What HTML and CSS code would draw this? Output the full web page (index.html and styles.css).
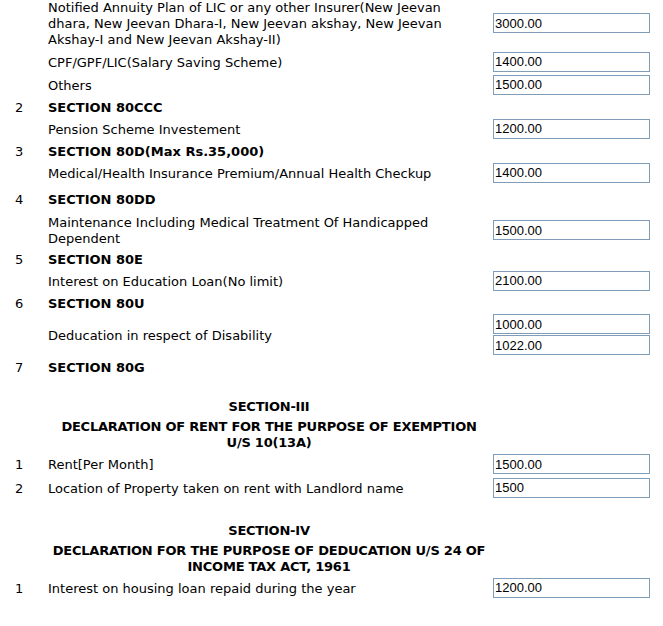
FILE: index.html
```html
<!DOCTYPE html>
<html>
<head>
<meta charset="utf-8">
<link rel="stylesheet" href="styles.css">
</head>
<body>
<div class="form">
  <div class="row r-tall">
    <span class="num"></span>
    <span class="label">Notified Annuity Plan of LIC or any other Insurer(New Jeevan dhara, New Jeevan Dhara-I, New Jeevan akshay, New Jeevan Akshay-I and New Jeevan Akshay-II)</span>
    <input class="field" type="text" value="3000.00">
  </div>
  <div class="row r-input">
    <span class="num"></span>
    <span class="label">CPF/GPF/LIC(Salary Saving Scheme)</span>
    <input class="field" type="text" value="1400.00">
  </div>
  <div class="row r-input">
    <span class="num"></span>
    <span class="label">Others</span>
    <input class="field" type="text" value="1500.00">
  </div>
  <div class="row r-text">
    <span class="num">2</span>
    <span class="label bold">SECTION 80CCC</span>
  </div>
  <div class="row r-input">
    <span class="num"></span>
    <span class="label">Pension Scheme Investement</span>
    <input class="field" type="text" value="1200.00">
  </div>
  <div class="row r-text">
    <span class="num">3</span>
    <span class="label bold">SECTION 80D(Max Rs.35,000)</span>
  </div>
  <div class="row r-input">
    <span class="num"></span>
    <span class="label">Medical/Health Insurance Premium/Annual Health Checkup</span>
    <input class="field" type="text" value="1400.00">
  </div>
  <div class="row r-text r-gap">
    <span class="num">4</span>
    <span class="label bold">SECTION 80DD</span>
  </div>
  <div class="row r-two r-gap3">
    <span class="num"></span>
    <span class="label">Maintenance Including Medical Treatment Of Handicapped Dependent</span>
    <input class="field" type="text" value="1500.00">
  </div>
  <div class="row r-text">
    <span class="num">5</span>
    <span class="label bold">SECTION 80E</span>
  </div>
  <div class="row r-input">
    <span class="num"></span>
    <span class="label">Interest on Education Loan(No limit)</span>
    <input class="field" type="text" value="2100.00">
  </div>
  <div class="row r-text">
    <span class="num">6</span>
    <span class="label bold">SECTION 80U</span>
  </div>
  <div class="row r-double">
    <span class="num"></span>
    <span class="label">Deducation in respect of Disability</span>
    <span class="stack">
      <input class="field" type="text" value="1000.00">
      <input class="field" type="text" value="1022.00">
    </span>
  </div>
  <div class="row r-text">
    <span class="num">7</span>
    <span class="label bold">SECTION 80G</span>
  </div>

  <div class="spacer s1"></div>
  <div class="row r-head">
    <span class="num"></span>
    <span class="label heading">SECTION-III</span>
  </div>
  <div class="row r-head2">
    <span class="num"></span>
    <span class="label heading">DECLARATION OF RENT FOR THE PURPOSE OF EXEMPTION<br>U/S 10(13A)</span>
  </div>
  <div class="row r-input r-rent">
    <span class="num">1</span>
    <span class="label">Rent[Per Month]</span>
    <input class="field" type="text" value="1500.00">
  </div>
  <div class="row r-input">
    <span class="num">2</span>
    <span class="label">Location of Property taken on rent with Landlord name</span>
    <input class="field" type="text" value="1500">
  </div>

  <div class="spacer s2"></div>
  <div class="row r-head">
    <span class="num"></span>
    <span class="label heading">SECTION-IV</span>
  </div>
  <div class="row r-head2">
    <span class="num"></span>
    <span class="label heading">DECLARATION FOR THE PURPOSE OF DEDUCATION U/S 24 OF<br>INCOME TAX ACT, 1961</span>
  </div>
  <div class="row r-input">
    <span class="num">1</span>
    <span class="label">Interest on housing loan repaid during the year</span>
    <input class="field" type="text" value="1200.00">
  </div>
</div>
</body>
</html>
```
FILE: styles.css
```css
html, body {
  margin: 0;
  padding: 0;
  background: #ffffff;
}

body {
  font-family: "DejaVu Sans", Verdana, sans-serif;
  font-size: 13px;
  line-height: 16px;
  color: #000000;
}

.form {
  margin-top: -4px;
  padding-left: 15px;
}

.row {
  display: grid;
  grid-template-columns: 33px 442px 160px;
  align-items: center;
}

.row > .field,
.row > .stack {
  margin-left: 3px;
}

.num,
.label {
  display: block;
  padding-top: 2px;
}

.label {
  max-width: 425px;
}

.bold {
  font-weight: bold;
}

.heading {
  max-width: none;
  font-weight: bold;
  text-align: center;
  white-space: nowrap;
  letter-spacing: -0.22px;
}

.r-tall { height: 54px; }
.r-input { height: 23px; }
.r-text { height: 21px; }
.r-gap { margin-top: 4px; }
.r-two { height: 36px; }
.r-gap3 { margin-top: 3px; }
.r-double { height: 43px; }
.r-head { height: 20px; }
.r-head2 { height: 36px; }
.r-rent { height: 24px; }

.spacer.s1 { height: 19px; }
.spacer.s2 { height: 21px; }

.stack {
  display: flex;
  flex-direction: column;
  gap: 1px;
}

.field {
  box-sizing: border-box;
  width: 157px;
  height: 20px;
  margin: 0;
  padding: 0 1px;
  border: 1px solid #7f9db9;
  background: #ffffff;
  font-family: "Liberation Sans", Arial, sans-serif;
  font-size: 13px;
  color: #000000;
  outline: none;
}
```
